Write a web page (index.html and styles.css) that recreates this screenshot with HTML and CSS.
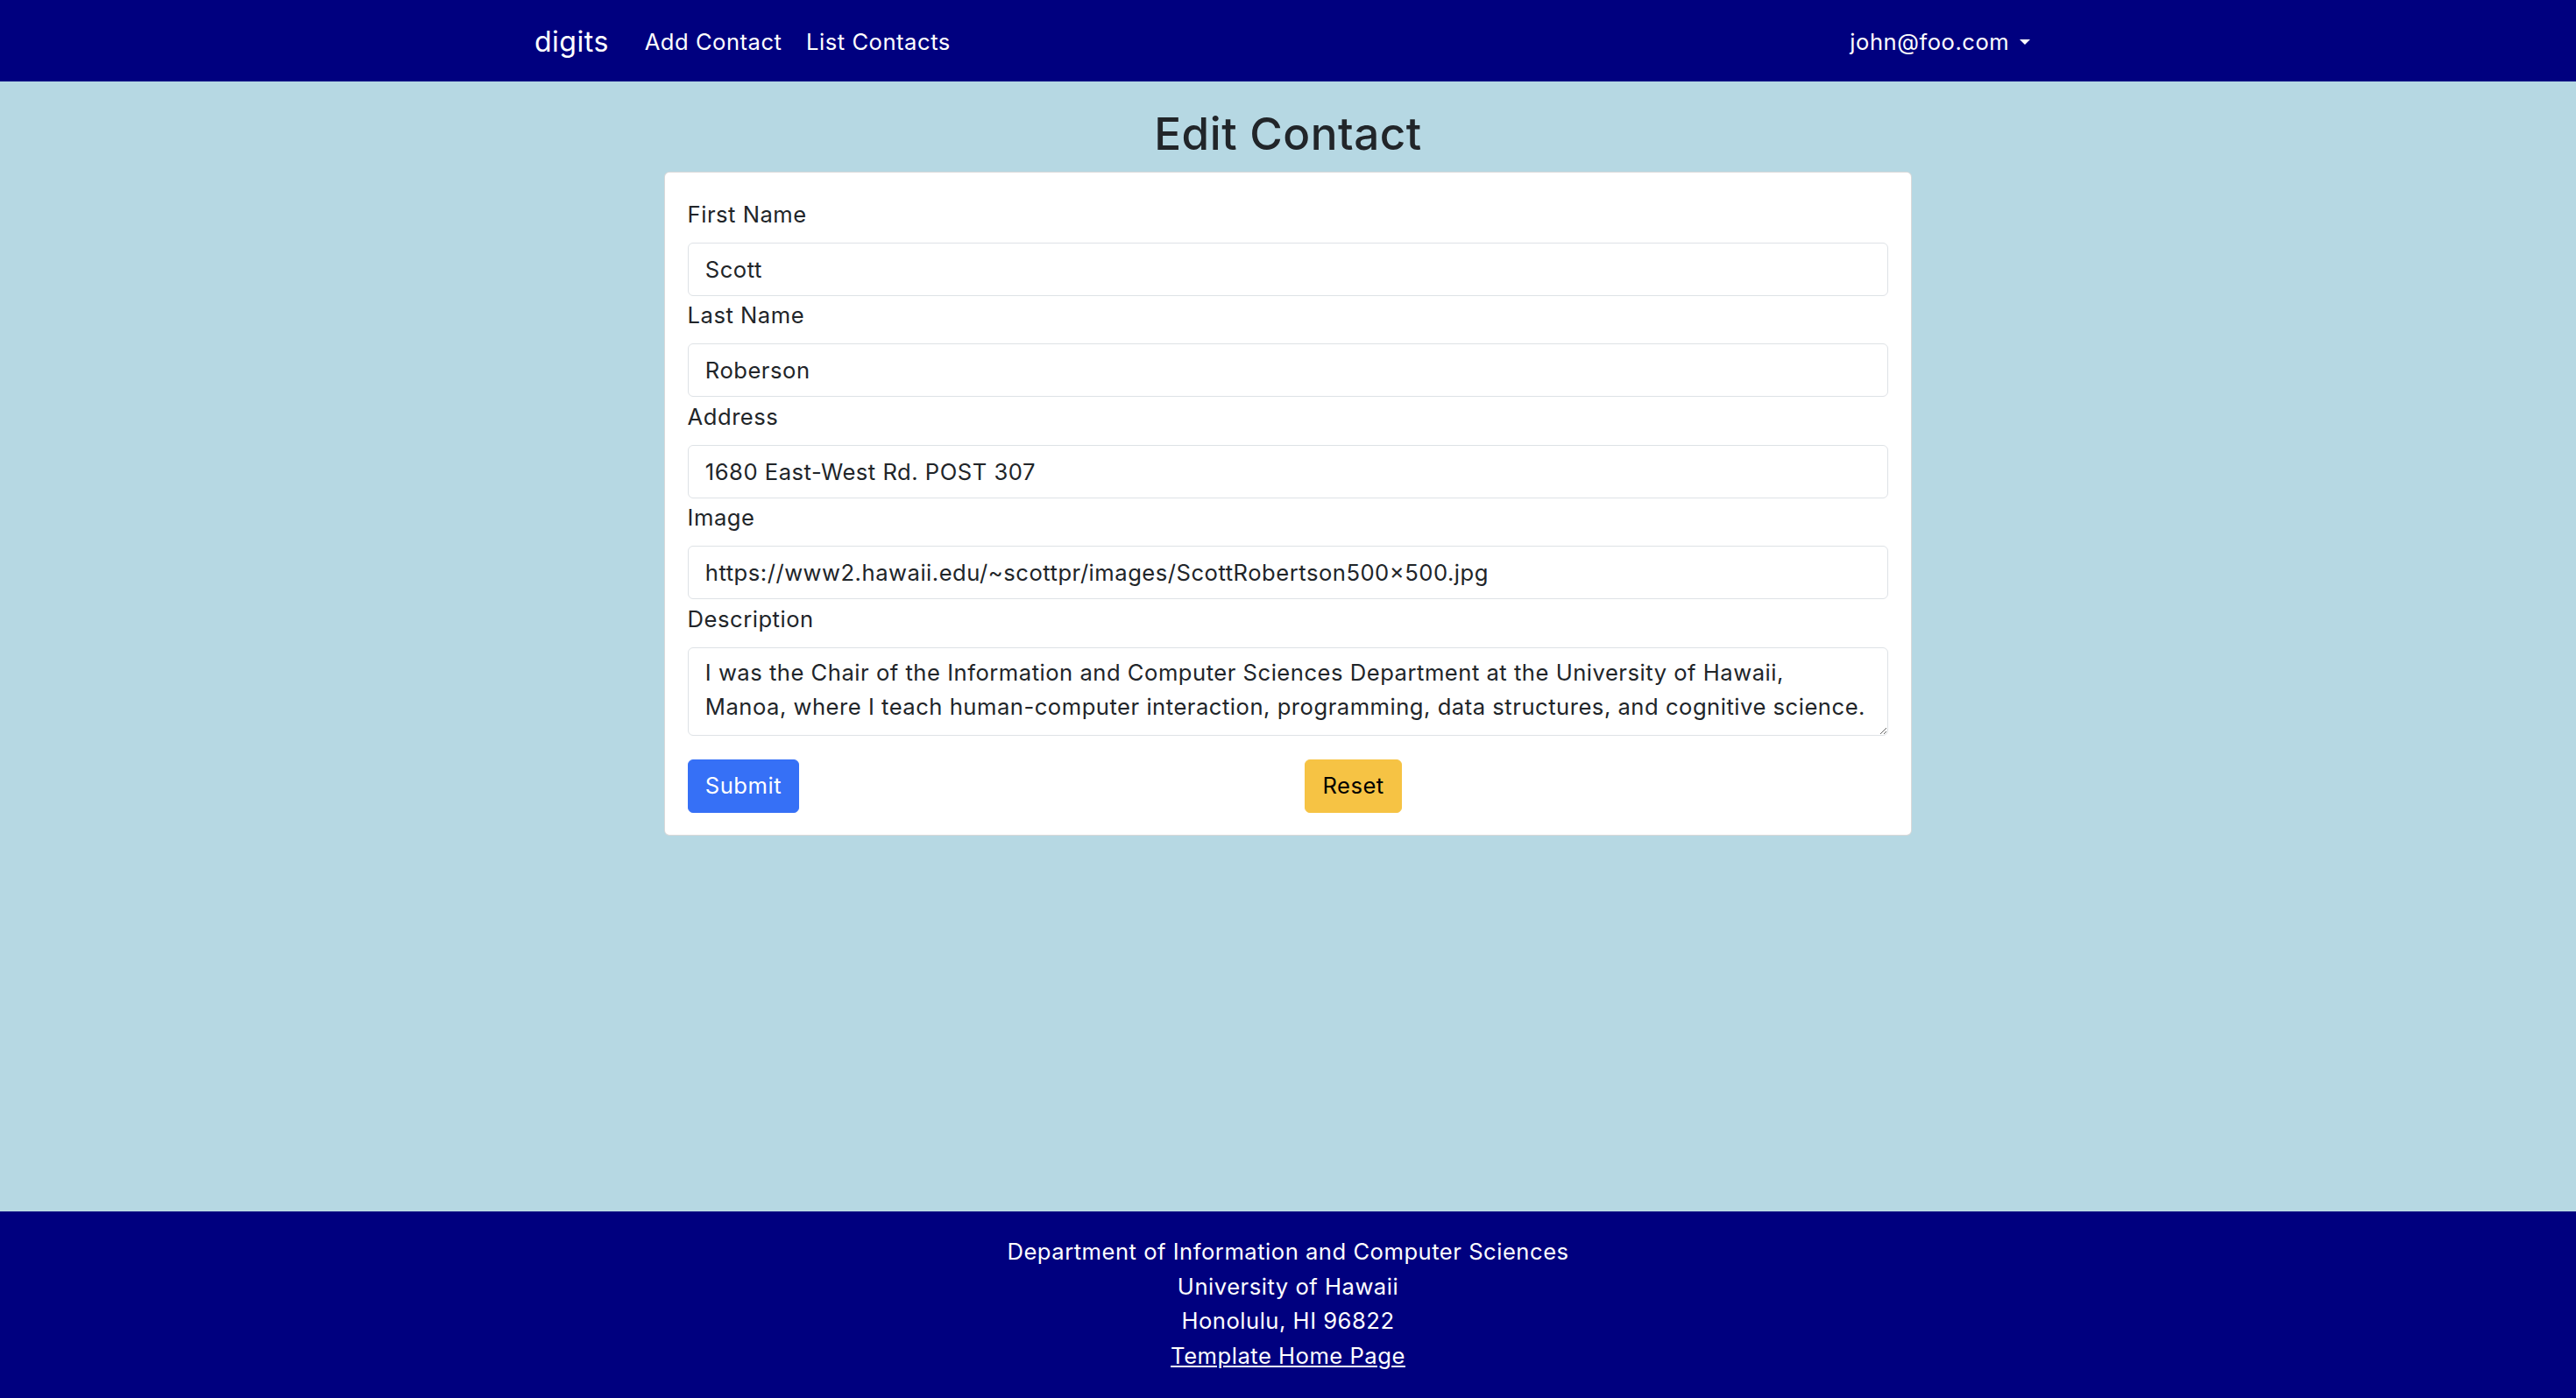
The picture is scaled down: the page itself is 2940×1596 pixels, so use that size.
FILE: index.html
```html
<!DOCTYPE html>
<html lang="en">
<head>
<meta charset="utf-8">
<title>Edit Contact</title>
<link rel="stylesheet" href="styles.css">
</head>
<body>
<nav class="navbar">
  <div class="nav-inner">
    <a class="brand" href="#">digits</a>
    <div class="nav-left">
      <a class="nav-link" href="#">Add Contact</a>
      <a class="nav-link" href="#">List Contacts</a>
    </div>
    <div class="nav-right">
      <a class="nav-link" href="#">john@foo.com<span class="caret"></span></a>
    </div>
  </div>
</nav>
<main class="main">
  <h2 class="title">Edit Contact</h2>
  <form class="card">
    <div class="field">
      <label class="label">First Name</label>
      <input class="input" type="text" value="Scott">
    </div>
    <div class="field">
      <label class="label">Last Name</label>
      <input class="input" type="text" value="Roberson">
    </div>
    <div class="field">
      <label class="label">Address</label>
      <input class="input" type="text" value="1680 East-West Rd. POST 307">
    </div>
    <div class="field">
      <label class="label">Image</label>
      <input class="input" type="text" value="https://www2.hawaii.edu/~scottpr/images/ScottRobertson500x500.jpg">
    </div>
    <div class="field">
      <label class="label">Description</label>
      <textarea class="input textarea" rows="2">I was the Chair of the Information and Computer Sciences Department at the University of Hawaii,
Manoa, where I teach human-computer interaction, programming, data structures, and cognitive science.</textarea>
    </div>
    <div class="actions">
      <button class="btn btn-primary" type="button">Submit</button>
      <button class="btn btn-warning" type="button">Reset</button>
    </div>
  </form>
</main>
<footer class="footer">
  <div>Department of Information and Computer Sciences</div>
  <div>University of Hawaii</div>
  <div>Honolulu, HI 96822</div>
  <div><a class="footer-link" href="#">Template Home Page</a></div>
</footer>
</body>
</html>
```
FILE: styles.css
```css
html, body {
  margin: 0;
  padding: 0;
}
body {
  font-family: Inter, "Noto Sans", "Liberation Sans", sans-serif;
  font-size: 25.6px;
  line-height: 1.5;
  letter-spacing: 0.02em;
  font-feature-settings: "calt" 1;
  color: #212529;
  background: #b6d8e3;
  min-height: 100vh;
  display: flex;
  flex-direction: column;
}
.navbar {
  background: #00007f;
  height: 93px;
  display: flex;
  align-items: center;
}
.nav-inner {
  width: 1720px;
  margin: 0 auto;
  padding-top: 3px;
  display: flex;
  align-items: center;
}
.brand {
  font-size: 32px;
  line-height: 48px;
  color: #fff;
  text-decoration: none;
  margin-right: 28px;
}
.nav-left {
  display: flex;
  gap: 2px;
}
.nav-right {
  margin-left: auto;
  display: flex;
}
.nav-link {
  color: #fff;
  text-decoration: none;
  padding: 0 12.8px;
  line-height: 38.4px;
}
.caret {
  display: inline-block;
  width: 0;
  height: 0;
  margin-left: 12px;
  border-top: 6.5px solid #fff;
  border-left: 6.5px solid transparent;
  border-right: 6.5px solid transparent;
  vertical-align: 6px;
}
.main {
  padding-top: 29px;
}
.title {
  margin: 0 0 12.8px;
  font-size: 51.2px;
  font-weight: 500;
  line-height: 1.2;
  text-align: center;
}
.card {
  box-sizing: border-box;
  width: 1424px;
  margin: 0 auto;
  background: #fff;
  border: 1px solid rgba(0, 0, 0, 0.15);
  border-radius: 6px;
  padding: 28.5px 25.6px 25.6px;
}
.field + .field {
  margin-top: 3.5px;
}
.label {
  display: block;
  margin-bottom: 12.8px;
}
.input {
  display: block;
  box-sizing: border-box;
  width: 100%;
  height: 60.8px;
  margin: 0;
  padding: 9.6px 19.2px;
  font: inherit;
  letter-spacing: inherit;
  font-feature-settings: "calt" 1;
  line-height: 38.4px;
  color: #212529;
  background: #fff;
  border: 1.6px solid #dee2e6;
  border-radius: 6px;
  outline: none;
}
.textarea {
  height: 101px;
  padding-right: 6px;
  resize: vertical;
  overflow: hidden;
  white-space: pre-wrap;
}
.actions {
  display: grid;
  grid-template-columns: 1fr 1fr;
  column-gap: 38.4px;
  margin-top: 27px;
}
.btn {
  justify-self: start;
  font: inherit;
  letter-spacing: inherit;
  line-height: 38.4px;
  padding: 10.2px 19.2px;
  border-radius: 6px;
  cursor: pointer;
}
.btn-primary {
  background: #3670f6;
  border: 1.6px solid #3670f6;
  color: #fff;
}
.btn-warning {
  background: #f6c344;
  border: 1.6px solid #f6c344;
  color: #000;
}
.footer {
  margin-top: auto;
  background: #00007f;
  color: #fff;
  text-align: center;
  line-height: 39.7px;
  padding: 25.6px 0 28.4px;
}
.footer-link {
  color: #fff;
  text-decoration: underline;
}
```
